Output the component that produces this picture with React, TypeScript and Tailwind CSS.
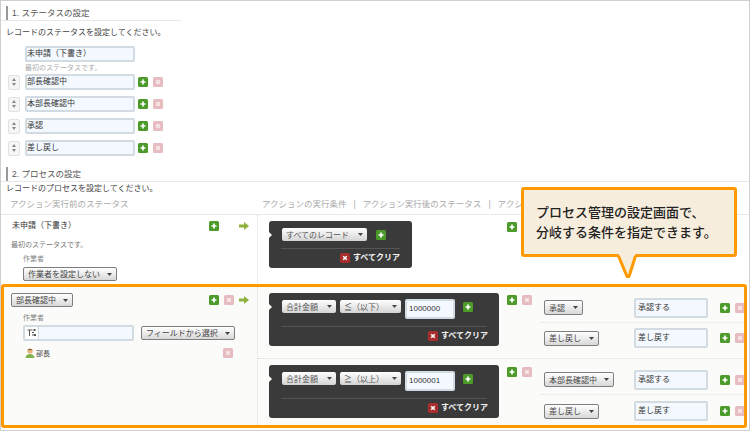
import React from "react";

const Plus = () => (
  <svg width="10" height="10" viewBox="0 0 10 10" className="shrink-0 block">
    <rect width="10" height="10" rx="1.5" fill="#4c9a2a" />
    <path d="M5 2.5v5M2.5 5h5" stroke="#fff" strokeWidth="1.7" />
  </svg>
);
const Cross = ({ dark }: { dark?: boolean }) => (
  <svg width="10" height="10" viewBox="0 0 10 10" className="shrink-0 block">
    <rect width="10" height="10" rx="1.5" fill={dark ? "#a82e2e" : "#e6bcc0"} />
    <path d="M3.2 3.2l3.6 3.6M6.8 3.2l-3.6 3.6" stroke={dark ? "#fff" : "#f8eeee"} strokeWidth="1.5" />
  </svg>
);
const Arrow = () => (
  <svg width="10" height="8" viewBox="0 0 10 8" className="shrink-0 block">
    <path d="M0 2.6h5V0l5 4-5 4V5.4H0z" fill="#8fb23e" />
  </svg>
);
const Caret = () => (
  <svg width="5" height="3" viewBox="0 0 5 3" className="shrink-0 block">
    <path d="M0 0h5L2.5 3z" fill="#444" />
  </svg>
);
const Sorter = () => (
  <div className="w-[12px] h-[15px] shrink-0 flex flex-col items-center justify-center gap-[2px] bg-[#f6f6f6] border border-[#e2e2e2] rounded-[2px]">
    <svg width="4" height="3" viewBox="0 0 4 3" className="block"><path d="M2 0l2 3H0z" fill="#888" /></svg>
    <svg width="4" height="3" viewBox="0 0 4 3" className="block"><path d="M0 0h4L2 3z" fill="#888" /></svg>
  </div>
);
const Select = ({ label, w, h = "h-[14px]" }: { label: string; w: string; h?: string }) => (
  <div className={`${w} ${h} shrink-0 flex items-center justify-between px-[4px] rounded-[2px] border border-[#7e7e7e] bg-gradient-to-b from-[#ffffff] to-[#d8d8d8] text-[8px] leading-none text-[#444] whitespace-nowrap font-['Noto_Sans_CJK_JP',sans-serif]`}>
    <span>{label}</span>
    <Caret />
  </div>
);
const DarkSelect = ({ label, w }: { label: string; w: string }) => (
  <div className={`${w} h-[13px] shrink-0 flex items-center justify-between px-[4px] rounded-[2px] bg-gradient-to-b from-[#ffffff] to-[#d4d4d4] text-[8px] leading-none text-[#555] whitespace-nowrap font-['Noto_Sans_CJK_JP',sans-serif]`}>
    <span>{label}</span>
    <Caret />
  </div>
);
const TextBox = ({ value, w, h, pad = "pl-[2px]" }: { value?: string; w: string; h: string; pad?: string }) => (
  <div className={`${w} ${h} ${pad} shrink-0 flex items-center border-2 border-[#d3dbe2] rounded-[2px] bg-[#f4f9ff] text-[8px] leading-none text-[#333] whitespace-nowrap`}>
    {value}
  </div>
);
const Clear = () => (
  <div className="flex items-center gap-[3px] text-[8px] leading-none font-bold text-[#f4f4f4] whitespace-nowrap">
    <Cross dark />
    <span>すべてクリア</span>
  </div>
);
const Notch = () => (
  <div className="absolute left-0 top-[11px] w-0 h-0 border-y-[3px] border-y-transparent border-l-[3px] border-l-[#fbfbf9]" />
);
const Heading = ({ text, cls }: { text: string; cls: string }) => (
  <div className={`${cls} border-b border-[#e8e8e8]`}>
    <div className="h-[14px] ml-[5px] pl-[4px] border-l-2 border-[#999] flex items-center text-[8.5px] leading-none text-[#555]">
      {text}
    </div>
  </div>
);

const StatusRow = ({ label }: { label: string }) => (
  <div className="flex items-center ml-[2px]">
    <Sorter />
    <div className="ml-[5px]">
      <TextBox value={label} w="w-[110px]" h="h-[16px]" pad="pl-0" />
    </div>
    <div className="ml-[3px]"><Plus /></div>
    <div className="ml-[5px]"><Cross /></div>
  </div>
);

const Condition = ({ op, val }: { op: string; val: string }) => (
  <div className="relative ml-[11px] mt-[6px] w-[230px] h-[53px] shrink-0 bg-[#3a3a3a] rounded-[3px]">
    <Notch />
    <div className="flex items-start pl-[13px] pt-[6px] h-[33px] mx-0">
      <div className="mt-[1px]"><DarkSelect label="合計金額" w="w-[54px]" /></div>
      <div className="ml-[4px] mt-[1px]"><DarkSelect label={op} w="w-[61px]" /></div>
      <div className="ml-[4px]">
        <TextBox value={val} w="w-[50px]" h="h-[20px]" />
      </div>
      <div className="ml-[8px] mt-[3px]"><Plus /></div>
    </div>
    <div className="mx-[12px] border-t border-[#555]" />
    <div className="flex justify-end pr-[11px] pt-[4px]">
      <Clear />
    </div>
  </div>
);

const Action = ({ status, w, action, cls }: { status: string; w: string; action: string; cls: string }) => (
  <div className={`flex items-center pl-[4px] ${cls}`}>
    <div className="w-[90px] shrink-0">
      <Select label={status} w={w} h="h-[15px]" />
    </div>
    <TextBox value={action} w="w-[74px]" h="h-[20px]" />
    <div className="ml-[12px]"><Plus /></div>
    <div className="ml-[5px]"><Cross /></div>
  </div>
);

const Group = ({ op, val, rows, cls }: { op: string; val: string; rows: React.ReactNode; cls: string }) => (
  <div className={`flex ${cls}`}>
    <Condition op={op} val={val} />
    <div className="flex gap-[5px] ml-[8px] mt-[8px] h-[10px]">
      <Plus />
      <Cross />
    </div>
    <div className="ml-[8px] w-[204px] shrink-0">{rows}</div>
  </div>
);

export default function App() {
  return (
    <div className="relative w-[750px] h-[431px] overflow-hidden bg-white border border-[#cfcfcf] font-['Liberation_Sans','Noto_Sans_CJK_JP',sans-serif] text-[#333]">
      <div className="pt-[5px]">
        <Heading text="1. ステータスの設定" cls="w-[180px]" />
        <div className="ml-[5px] mt-[6px] h-[12px] flex items-center text-[8px] leading-none text-[#444]">
          レコードのステータスを設定してください。
        </div>
        <div className="ml-[24px] mt-[7px]">
          <TextBox value="未申請（下書き）" w="w-[110px]" h="h-[16px]" pad="pl-0" />
          <div className="h-[10px] flex items-center text-[7px] leading-none text-[#aaa]">最初のステータスです。</div>
        </div>
        <div className="mt-[2px] ml-[5px] flex flex-col gap-[6px]">
          <StatusRow label="部長確認中" />
          <StatusRow label="本部長確認中" />
          <StatusRow label="承認" />
          <StatusRow label="差し戻し" />
        </div>
        <div className="mt-[11px]">
          <Heading text="2. プロセスの設定" cls="w-full" />
        </div>
        <div className="ml-[5px] mt-[1px] h-[12px] flex items-center text-[8px] leading-none text-[#444]">
          レコードのプロセスを設定してください。
        </div>
        <div className="h-[20px] pb-[1px] pl-[9px] flex items-center border-b border-[#eaeaea] text-[8.5px] leading-none text-[#aaa] whitespace-nowrap">
          <span className="w-[252px] shrink-0">アクション実行前のステータス</span>
          <span>アクションの実行条件</span>
          <span className="mx-[7px]">|</span>
          <span>アクション実行後のステータス</span>
          <span className="mx-[7px]">|</span>
          <span>アクション名</span>
        </div>

        <div className="flex h-[68px]">
          <div className="w-[257px] shrink-0 pt-[6px] border-r border-dotted border-[#dcdcdc]">
            <div className="flex items-center h-[10px] pl-[11px] pr-[8px]">
              <span className="text-[8px] leading-none text-[#333]">未申請（下書き）</span>
              <div className="ml-auto"><Plus /></div>
              <div className="ml-[20px]"><Arrow /></div>
            </div>
            <div className="mt-[8px] ml-[10px] h-[10px] flex items-center text-[7px] leading-none text-[#777]">最初のステータスです。</div>
            <div className="mt-[4px] ml-[22px] h-[10px] flex items-center text-[7px] leading-none text-[#888]">作業者</div>
            <div className="mt-[4px] ml-[22px]">
              <Select label="作業者を設定しない" w="w-[94px]" />
            </div>
          </div>
          <div className="flex">
            <div className="relative ml-[11px] mt-[6px] w-[143px] h-[47px] bg-[#3a3a3a] rounded-[3px]">
              <Notch />
              <div className="flex items-start pl-[13px] pt-[7px] h-[27px]">
                <DarkSelect label="すべてのレコード" w="w-[85px]" />
                <div className="ml-[9px] mt-[2px]"><Plus /></div>
              </div>
              <div className="mx-[12px] border-t border-[#555]" />
              <div className="flex justify-end pr-[12px] pt-[4px]">
                <Clear />
              </div>
            </div>
            <div className="ml-[95px] mt-[7px]"><Plus /></div>
          </div>
        </div>

        <div className="mt-[1px] w-[746px] h-[144px] border-[3px] border-[#ff9900] rounded-[3px] bg-[#fbfbf9] flex overflow-hidden">
          <div className="w-[254px] shrink-0 pt-[6px] border-r border-dotted border-[#dcdcdc]">
            <div className="flex items-center pl-[7px] pr-[8px]">
              <Select label="部長確認中" w="w-[62px]" />
              <div className="ml-auto"><Plus /></div>
              <div className="ml-[5px]"><Cross /></div>
              <div className="ml-[5px]"><Arrow /></div>
            </div>
            <div className="mt-[5px] ml-[19px] h-[10px] flex items-center text-[7px] leading-none text-[#888]">作業者</div>
            <div className="mt-[3px] ml-[19px] flex items-center">
              <div className="w-[111px] h-[16px] flex border-2 border-[#d3dbe2] rounded-[2px] bg-[#f4f9ff]">
                <div className="w-[14px] h-full bg-white border-r border-[#d3dbe2] flex items-center justify-center">
                  <svg width="9" height="8" viewBox="0 0 9 8" className="block">
                    <path d="M0.5 1h5M2.5 1v6M5 3.5h2M5 6h2" stroke="#555" strokeWidth="1" fill="none" />
                    <rect x="6.5" y="0" width="2" height="2" fill="#555" />
                    <rect x="7" y="5" width="2" height="2" fill="#555" />
                  </svg>
                </div>
              </div>
              <div className="ml-[7px]">
                <Select label="フィールドから選択" w="w-[94px]" />
              </div>
            </div>
            <div className="mt-[7px] ml-[21px] pr-[24px] h-[10px] flex items-center">
              <svg width="10" height="10" viewBox="0 0 10 10" className="shrink-0 block">
                <circle cx="5" cy="3" r="2.6" fill="#e8b27c" />
                <path d="M2.4 2.6C2.6.4 7.4.4 7.6 2.6 6.5 1.6 3.5 1.6 2.4 2.6z" fill="#6b3f1d" />
                <path d="M0.5 10c.3-3 2.4-4 4.5-4s4.2 1 4.5 4z" fill="#7fb24a" />
              </svg>
              <span className="ml-[1px] text-[7px] leading-none text-[#444]">部長</span>
              <div className="ml-auto"><Cross /></div>
            </div>
          </div>
          <div className="flex-1 min-w-0 flex flex-col">
            <Group
              op="≦（以下）"
              val="1000000"
              cls="h-[72px] border-b border-dotted border-[#dcdcdc]"
              rows={
                <>
                  <Action status="承認" w="w-[39px]" action="承認する" cls="h-[36px] pt-[6px] border-b border-dotted border-[#e2e2e2]" />
                  <Action status="差し戻し" w="w-[55px]" action="差し戻す" cls="h-[35px] pb-[5px]" />
                </>
              }
            />
            <Group
              op="≧（以上）"
              val="1000001"
              cls="flex-1"
              rows={
                <>
                  <Action status="本部長確認中" w="w-[70px]" action="承認する" cls="h-[36px] pt-[6px] border-b border-dotted border-[#e2e2e2]" />
                  <Action status="差し戻し" w="w-[55px]" action="差し戻す" cls="h-[29px] pt-[3px]" />
                </>
              }
            />
          </div>
        </div>
      </div>

      <div className="absolute left-[520px] top-[186px] w-[216px] h-[70px] border-[3px] border-[#ff9900] rounded-[3px] bg-[#f7eddc] pl-[12px] pt-[12px] text-[13px] leading-[20px] font-medium text-[#222] font-['Noto_Sans_CJK_JP',sans-serif] whitespace-nowrap">
        <p>プロセス管理の設定画面で、</p>
        <p>分岐する条件を指定できます。</p>
      </div>
      <svg width="24" height="26" viewBox="0 0 24 26" className="absolute left-[615px] top-[253px] block">
        <path d="M2.5 0L12 23 19.5 0z" fill="#f7eddc" />
        <path d="M2.5 2L11 22.5 13 22.5 19.5 2" fill="none" stroke="#ff9900" strokeWidth="3" strokeLinejoin="round" />
      </svg>
    </div>
  );
}
